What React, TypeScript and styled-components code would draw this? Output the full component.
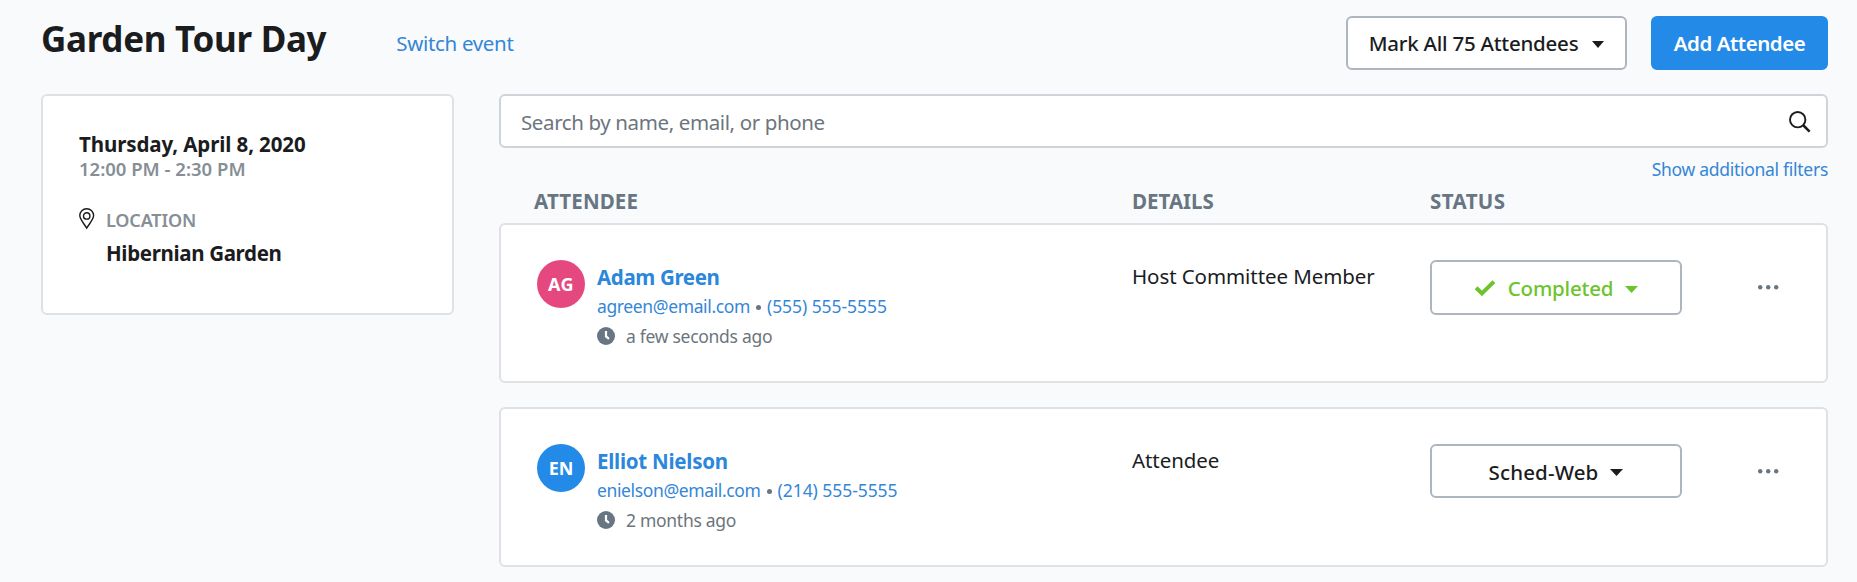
import React from "react";
import styled, { createGlobalStyle } from "styled-components";

const GlobalStyle = createGlobalStyle`
  *, *::before, *::after { box-sizing: border-box; }
  body {
    margin: 0;
    background: #f8fafc;
    color: #1b1c1e;
    font-family: "Noto Sans", "Open Sans", sans-serif;
    font-size: 20.5px;
    line-height: 28px;
    overflow: hidden;
  }
  button, input { font: inherit; color: inherit; }
  svg { display: block; flex: none; }
`;

const Page = styled.div`
  min-height: 582px;
  padding: 16px 29px 0 41px;
`;

const Header = styled.header`
  display: flex;
  align-items: flex-start;
  height: 54px;
  margin-bottom: 24px;
`;

const Title = styled.h1`
  margin: -1px 0 0;
  font-size: 35px;
  line-height: 48px;
  font-weight: 700;
  letter-spacing: -0.3px;
  white-space: nowrap;
`;

const Link = styled.a<{ $track?: number }>`
  color: #3486d6;
  text-decoration: none;
  white-space: nowrap;
  letter-spacing: ${(p) => p.$track ?? 0}px;
`;

const SwitchLink = styled(Link)`
  margin: 13px auto 0 70px;
`;

const Actions = styled.div`
  display: flex;
  gap: 24px;
`;

const Button = styled.button<{ $track?: number; $color?: string }>`
  display: flex;
  align-items: center;
  justify-content: center;
  height: 54px;
  padding: 0;
  border: 2px solid #adb5bf;
  border-radius: 6px;
  background: #fff;
  color: ${(p) => p.$color ?? "#1b1c1e"};
  font-weight: 500;
  white-space: nowrap;
  letter-spacing: ${(p) => p.$track ?? 0}px;
`;

const MarkAllButton = styled(Button)`
  width: 281px;
  gap: 14px;
`;

const PrimaryButton = styled(Button)`
  width: 177px;
  border-color: #248ae8;
  background: #248ae8;
  font-weight: 600;
`;

const StatusButton = styled(Button)<{ $tall?: boolean }>`
  width: 252px;
  height: ${(p) => (p.$tall ? 55 : 54)}px;
  padding-top: 1px;
  gap: 12px;
`;

const Columns = styled.div`
  display: grid;
  grid-template-columns: 413px 1329px;
  column-gap: 45px;
  align-items: start;
`;

const Card = styled.section`
  border: 2px solid #dfe1e4;
  border-radius: 6px;
  background: #fff;
`;

const EventCard = styled(Card)`
  height: 221px;
  padding: 34px 36px 0;
`;

const Strong = styled.div<{ $track?: number }>`
  font-weight: 700;
  white-space: nowrap;
  letter-spacing: ${(p) => p.$track ?? 0}px;
`;

const EventTime = styled.div`
  margin-top: -1px;
  color: #868e96;
  font-size: 18.5px;
  line-height: 24px;
  font-weight: 600;
`;

const Location = styled.div`
  display: flex;
  gap: 11px;
  margin-top: 27px;
`;

const LocationLabel = styled.div`
  margin-bottom: 7px;
  color: #868e96;
  font-size: 18px;
  line-height: 24px;
  font-weight: 600;
  letter-spacing: -0.15px;
`;

const SearchBox = styled.label`
  display: flex;
  align-items: center;
  height: 54px;
  padding: 0 15px 0 20px;
  border: 2px solid #ced4da;
  border-radius: 6px;
  background: #fff;
`;

const SearchInput = styled.input`
  flex: 1;
  height: 50px;
  padding: 1px 0 0;
  border: 0;
  outline: 0;
  background: none;
  letter-spacing: -0.387px;
  &::placeholder { color: #6c757d; opacity: 1; }
`;

const FilterLine = styled.div`
  display: flex;
  justify-content: flex-end;
  margin: 9px 0 6px;
  font-size: 17.5px;
  line-height: 24px;
`;

const TableHead = styled.div`
  display: grid;
  grid-template-columns: 633px 298px 1fr;
  margin-bottom: 8px;
  color: #687582;
  font-weight: 700;
`;

const HeadCell = styled.div<{ $indent?: number; $track: number }>`
  padding-left: ${(p) => p.$indent ?? 0}px;
  letter-spacing: ${(p) => p.$track}px;
`;

const AttendeeCard = styled(Card)`
  display: grid;
  grid-template-columns: 631px 298px 328px 1fr;
  align-items: start;
  height: 160px;
  margin-bottom: 24px;
  padding-top: 35px;
`;

const Person = styled.div`
  display: flex;
  gap: 12px;
  padding-left: 36px;
`;

const Avatar = styled.div<{ $bg: string; $track: number }>`
  display: flex;
  align-items: center;
  justify-content: center;
  width: 48px;
  height: 48px;
  border-radius: 50%;
  background: ${(p) => p.$bg};
  color: #fff;
  font-size: 18px;
  font-weight: 700;
  letter-spacing: ${(p) => p.$track}px;
`;

const PersonInfo = styled.div`
  padding-top: 3px;
`;

const PersonName = styled(Strong)`
  color: #2b87dc;
`;

const Contact = styled.div`
  display: flex;
  align-items: center;
  margin-top: 3px;
  font-size: 17.5px;
  line-height: 24px;
`;

const Bullet = styled.span`
  width: 5px;
  height: 5px;
  margin: 2px 6px 0 6px;
  border-radius: 50%;
  background: #687582;
`;

const Activity = styled.div`
  display: flex;
  gap: 11px;
  margin-top: 6px;
  color: #6c757d;
  font-size: 17.5px;
  line-height: 24px;
  letter-spacing: -0.29px;
`;

const ClockSlot = styled.span`
  padding-top: 3px;
`;

const Role = styled.div`
  padding-top: 2px;
  letter-spacing: -0.08px;
`;

const MoreButton = styled.button`
  height: 54px;
  padding: 0;
  border: 0;
  background: none;
  justify-self: start;
`;

const CaretShape = styled.svg`
  margin-top: 2px;
`;

const Caret = ({ width = 12 }: { width?: number }) => (
  <CaretShape width={width} height="7" viewBox="0 0 12 6" preserveAspectRatio="none">
    <path d="M0 0h12L6 6z" fill="currentColor" />
  </CaretShape>
);

const CheckIcon = () => (
  <svg width="22" height="16" viewBox="0 0 21 16">
    <path d="M1.6 7.8 7.4 13.4 19.4 1.6" fill="none" stroke="#6cc42c" strokeWidth="4" />
  </svg>
);

const PinIcon = () => (
  <svg width="16" height="22" viewBox="0 0 16 22" fill="none" stroke="#1b1c1e" strokeWidth="1.4">
    <path d="M7.7.8C3.8.8.8 3.8.8 7.6c0 3.6 3.700 7.200 6.900 12.600 3.200-5.400 6.900-9 6.900-12.600C14.600 3.800 11.600.8 7.700.8z" />
    <circle cx="7.700" cy="7.900" r="3.200" />
  </svg>
);

const SearchGlyph = styled.svg`
  margin-top: 2px;
`;

const SearchIcon = () => (
  <SearchGlyph width="22" height="22" viewBox="0 0 22 22" fill="none" stroke="#1b1c1e" strokeWidth="1.9">
    <circle cx="8.700" cy="8.700" r="7.700" />
    <path d="M14 14 20.600 20.600" strokeWidth="2.500" />
  </SearchGlyph>
);

const ClockIcon = () => (
  <svg width="18" height="18" viewBox="0 0 18 18">
    <circle cx="9" cy="9" r="9" fill="#687582" />
    <path d="M9 4v5.400l3 2.400" fill="none" stroke="#fff" strokeWidth="2.200" />
  </svg>
);

const DotsIcon = () => (
  <svg width="21" height="5" viewBox="0 0 21 5" fill="#687582">
    <circle cx="2.200" cy="2.200" r="2.200" />
    <circle cx="10.200" cy="2.200" r="2.200" />
    <circle cx="18.200" cy="2.200" r="2.200" />
  </svg>
);

type Attendee = {
  initials: string;
  avatar: string;
  initialsTrack: number;
  name: string;
  nameTrack: number;
  email: string;
  phone: string;
  seen: string;
  role: string;
  status: string;
  statusTrack: number;
  done: boolean;
};

const attendees: Attendee[] = [
  {
    initials: "AG", avatar: "#e5487f", initialsTrack: 0.4,
    name: "Adam Green", nameTrack: -0.36,
    email: "agreen@email.com", phone: "(555) 555-5555",
    seen: "a few seconds ago", role: "Host Committee Member",
    status: "Completed", statusTrack: -0.2, done: true,
  },
  {
    initials: "EN", avatar: "#248ae8", initialsTrack: 0,
    name: "Elliot Nielson", nameTrack: -0.26,
    email: "enielson@email.com", phone: "(214) 555-5555",
    seen: "2 months ago", role: "Attendee",
    status: "Sched-Web", statusTrack: 0.13, done: false,
  },
];

const AttendeeRow = ({ a }: { a: Attendee }) => (
  <AttendeeCard>
    <Person>
      <Avatar $bg={a.avatar} $track={a.initialsTrack}>{a.initials}</Avatar>
      <PersonInfo>
        <PersonName $track={a.nameTrack}>{a.name}</PersonName>
        <Contact>
          <Link $track={-0.37}>{a.email}</Link>
          <Bullet />
          <Link $track={-0.06}>{a.phone}</Link>
        </Contact>
        <Activity>
          <ClockSlot><ClockIcon /></ClockSlot>
          {a.seen}
        </Activity>
      </PersonInfo>
    </Person>
    <Role>{a.role}</Role>
    <StatusButton $tall={a.done} $track={a.statusTrack} $color={a.done ? "#6cc42c" : undefined}>
      {a.done && <CheckIcon />}
      {a.status}
      <Caret width={13} />
    </StatusButton>
    <MoreButton aria-label="More"><DotsIcon /></MoreButton>
  </AttendeeCard>
);

export default function App() {
  return (
    <Page>
      <GlobalStyle />
      <Header>
        <Title>Garden Tour Day</Title>
        <SwitchLink $track={-0.33}>Switch event</SwitchLink>
        <Actions>
          <MarkAllButton $track={-0.23}>
            Mark All 75 Attendees
            <Caret />
          </MarkAllButton>
          <PrimaryButton $track={-0.46} $color="#fff">Add Attendee</PrimaryButton>
        </Actions>
      </Header>
      <Columns>
        <EventCard>
          <Strong $track={-0.1}>Thursday, April 8, 2020</Strong>
          <EventTime>12:00 PM - 2:30 PM</EventTime>
          <Location>
            <PinIcon />
            <div>
              <LocationLabel>LOCATION</LocationLabel>
              <Strong $track={-0.34}>Hibernian Garden</Strong>
            </div>
          </Location>
        </EventCard>
        <main>
          <SearchBox>
            <SearchInput placeholder="Search by name, email, or phone" />
            <SearchIcon />
          </SearchBox>
          <FilterLine>
            <Link $track={-0.28}>Show additional filters</Link>
          </FilterLine>
          <TableHead>
            <HeadCell $indent={35} $track={0.15}>ATTENDEE</HeadCell>
            <HeadCell $track={0}>DETAILS</HeadCell>
            <HeadCell $track={0.4}>STATUS</HeadCell>
          </TableHead>
          {attendees.map((a) => (
            <AttendeeRow key={a.name} a={a} />
          ))}
        </main>
      </Columns>
    </Page>
  );
}
